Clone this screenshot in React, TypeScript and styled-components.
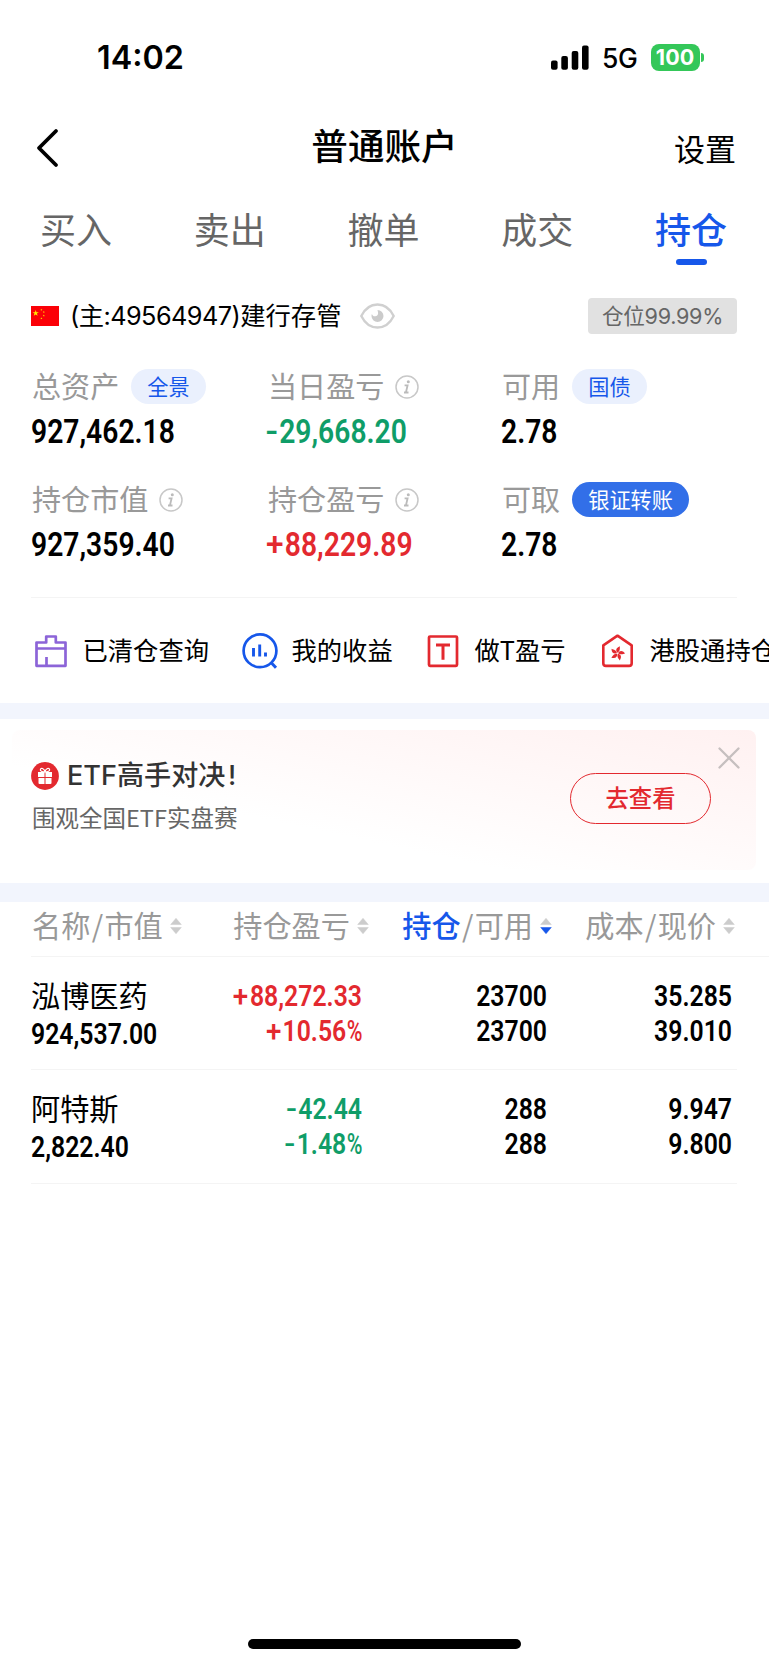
import React from "react";
import styled, { createGlobalStyle } from "styled-components";

const c = {
  blue: "#1657ea",
  red: "#e3292f",
  green: "#0f9d68",
  gray: "#999",
  band: "#f2f5fd",
  line: "#f4f4f4",
};

const CJK = `"Noto Sans CJK SC", sans-serif`;
const MIX = `Inter, "Noto Sans CJK SC", sans-serif`;

const Global = createGlobalStyle`
  * { box-sizing: border-box; }
  html, body { margin: 0; background: #fff; }
  body { font-family: ${CJK}; color: #000; overflow-x: hidden; }
  svg { display: block; flex: none; }
`;

const Page = styled.main`
  width: 769px;
  height: 1665px;
  display: flex;
  flex-direction: column;
  overflow: hidden;
  background: #fff;
`;

const StatusBar = styled.header`
  height: 96px;
  padding: 20px 65px 0 97px;
  display: flex;
  align-items: center;
  justify-content: space-between;
  font-family: Inter, sans-serif;
`;
const Clock = styled.span`
  font-size: 32.3px;
  font-weight: 600;
  line-height: 38px;
`;
const StatusRight = styled.div`
  display: flex;
  align-items: center;
  padding-bottom: 1px;
`;
const Network = styled.span`
  margin: 1px 13px 0 13px;
  font-size: 26.5px;
  font-weight: 500;
  line-height: 32px;
  letter-spacing: -0.3px;
`;
const Battery = styled.span`
  width: 49px;
  height: 27px;
  border-radius: 8px;
  background: #34c759;
  color: #fff;
  font-size: 21.5px;
  font-weight: 700;
  line-height: 27px;
  text-align: center;
`;
const BatteryTip = styled.span`
  width: 3px;
  height: 9px;
  margin-left: 1.5px;
  border-radius: 0 4px 4px 0;
  background: #34c759;
`;

const NavBar = styled.nav`
  height: 105px;
  padding: 0 33px 2px 36px;
  display: grid;
  grid-template-columns: 1fr auto 1fr;
  align-items: center;
`;
const Title = styled.h1`
  margin: 0 3px 5px 0;
  font-size: 36.6px;
  font-weight: 500;
  line-height: 44px;
`;
const Settings = styled.span`
  justify-self: end;
  font-size: 31px;
  line-height: 40px;
`;

const Tabs = styled.div`
  display: flex;
  height: 97px;
  margin: 0 1px 0 -1px;
`;
const Tab = styled.div<{ $active?: boolean }>`
  flex: 1;
  display: flex;
  flex-direction: column;
  align-items: center;
  font-size: 36px;
  line-height: 55px;
  font-weight: ${(p) => (p.$active ? 500 : 400)};
  color: ${(p) => (p.$active ? c.blue : "#666")};
`;
const TabMark = styled.span`
  width: 31px;
  height: 6px;
  margin-top: 3px;
  border-radius: 3px;
  background: ${c.blue};
`;

const Account = styled.section`
  height: 36px;
  padding: 0 32px 0 31px;
  display: flex;
  align-items: center;
`;
const AccountName = styled.span`
  margin: 0 19px 0 11px;
  font-family: ${MIX};
  font-size: 25.3px;
  line-height: 36px;
`;
const AccountNo = styled.span`
  letter-spacing: -0.55px;
`;
const Ratio = styled.span`
  margin-left: auto;
  width: 149px;
  height: 36px;
  border-radius: 4px;
  background: #e1e1e1;
  color: #666;
  font-family: ${MIX};
  font-size: 21.6px;
  line-height: 37px;
  letter-spacing: -0.3px;
  text-align: center;
`;

const Summary = styled.section`
  margin: 35px 32px 0 31px;
  height: 229px;
  display: grid;
  grid-template-columns: 236px 234px 1fr;
  grid-auto-rows: 80px;
  row-gap: 33px;
  border-bottom: 1px solid ${c.line};
`;
const Label = styled.div`
  height: 35px;
  padding-left: 1px;
  display: flex;
  align-items: center;
  gap: 12px;
  font-size: 29.1px;
  line-height: 33px;
  color: ${c.gray};

  > svg {
    margin-left: -1px;
  }
`;
const LabelText = styled.span`
  margin-top: -2px;
`;
const Pill = styled.span<{ $solid?: boolean }>`
  height: 35px;
  padding: 0 16px;
  border-radius: 18px;
  background: ${(p) => (p.$solid ? "#326fe8" : "#eaf0fd")};
  color: ${(p) => (p.$solid ? "#fff" : c.blue)};
  font-size: 21.2px;
  line-height: 33px;
`;
const Figure = styled.div<{ $size: number; $tone?: string; $right?: boolean }>`
  font-family: Roboto, sans-serif;
  font-weight: 600;
  font-size: ${(p) => p.$size}px;
  line-height: 35px;
  color: ${(p) => p.$tone ?? "#000"};
  text-align: ${(p) => (p.$right ? "right" : "left")};
  transform: scaleX(0.85);
  transform-origin: ${(p) => (p.$right ? "right" : "left")} center;
  white-space: nowrap;
`;
const Sign = styled.span<{ $minus: boolean }>`
  display: inline-block;
  margin-right: ${(p) => (p.$minus ? 3 : 2.5)}px;
  font-weight: 500;
  transform: ${(p) => (p.$minus ? "scaleX(1.3)" : "scaleX(1.12)")};
`;
const Percent = styled.span`
  display: inline-block;
  margin-left: -3px;
  font-weight: 500;
  transform: scaleX(0.86);
  transform-origin: right center;
`;
const SummaryFigure = styled(Figure)`
  margin-top: 9.5px;
  transform: scaleX(0.842);
`;

const Shortcuts = styled.section`
  height: 105px;
  padding-left: 33px;
  display: flex;
  align-items: center;
  overflow: hidden;
`;
const Shortcut = styled.div<{ $w: number }>`
  flex: none;
  width: ${(p) => p.$w}px;
  display: flex;
  align-items: center;
  gap: 13.5px;
  font-size: 25.3px;
  line-height: 36px;
  white-space: nowrap;
`;
const ShortcutText = styled.span`
  margin-top: -4px;
`;

const Band = styled.div<{ $h: number }>`
  height: ${(p) => p.$h}px;
  background: ${c.band};
`;

const Banner = styled.section`
  margin: 11px 13px 13px 12px;
  height: 140px;
  padding: 25px 45px 0 19px;
  display: flex;
  justify-content: space-between;
  border-radius: 8px;
  background: linear-gradient(12deg, #fff 35%, #fffafa 58%, #fff1f1 100%);
  position: relative;
`;
const BannerTitle = styled.div`
  display: flex;
  align-items: center;
  gap: 8px;
  height: 41px;
  font-family: ${MIX};
  font-size: 27.1px;
  font-weight: 500;
  line-height: 43px;
  color: #333;
`;
const Bang = styled.span`
  margin-left: 2.5px;
`;
const BannerSub = styled.div`
  margin: 4px 0 0 1px;
  font-size: 23.5px;
  line-height: 34px;
  color: #666;
`;
const BannerButton = styled.button`
  margin: 18px 0 0;
  width: 141px;
  height: 51px;
  padding: 0 0 3px;
  border: 1px solid ${c.red};
  border-radius: 26px;
  background: transparent;
  color: ${c.red};
  font-family: ${CJK};
  font-size: 23.3px;
  font-weight: 500;
`;
const Close = styled.span`
  position: absolute;
  top: 16px;
  right: 15px;
`;

const Row = styled.div`
  display: grid;
  margin-left: 31px;
`;
const HeadRow = styled(Row)`
  height: 55px;
  padding-top: 4px;
  border-bottom: 1px solid ${c.line};
  grid-template-columns: 155px 183px 183px 183px;
`;
const Head = styled.div<{ $left?: boolean }>`
  display: flex;
  align-items: center;
  justify-content: ${(p) => (p.$left ? "flex-start" : "flex-end")};
  padding-left: ${(p) => (p.$left ? 1 : 0)}px;
  gap: 7px;
  height: 40px;
  font-size: 29.2px;
  line-height: 38px;
  color: ${c.gray};
  white-space: nowrap;
`;
const HeadText = styled.span`
  margin-top: -4px;
`;
const Slash = styled.span`
  margin: 0 1.3px;
`;
const Strong = styled.b`
  font-weight: 500;
  color: ${c.blue};
`;
const Holding = styled(Row)`
  margin-right: 32px;
  height: 113.3px;
  grid-template-columns: 150px 181px 185px 185px;
  border-bottom: 1px solid ${c.line};
`;
const NameCell = styled.div`
  padding-top: 17px;
`;
const Name = styled.div`
  font-size: 29.2px;
  line-height: 40px;
  margin-bottom: 3px;
`;
const Cell = styled.div`
  padding-top: 22px;
`;
const HomeBar = styled.div`
  width: 273px;
  height: 10px;
  margin: auto 248px 16px;
  border-radius: 5px;
  background: #000;
`;

const Signal = () => (
  <svg width="38" height="25" viewBox="0 0 38 25">
    <rect x="0" y="15.5" width="6.6" height="9.2" rx="2" />
    <rect x="10.3" y="11" width="6.6" height="13.7" rx="2" />
    <rect x="20.7" y="6" width="6.6" height="18.7" rx="2" />
    <rect x="31" y="0.5" width="6.6" height="24.2" rx="2" />
  </svg>
);

const Back = () => (
  <svg width="24" height="40" viewBox="0 0 24 40" fill="none" stroke="#000" strokeWidth="3.8" strokeLinecap="round" strokeLinejoin="round">
    <path d="M20 3 3 20l17 17" />
  </svg>
);

const STAR = "M0-1 .225-.309.951-.309.363.118.588.809 0 .382-.588.809-.363.118-.951-.309-.225-.309Z";
const Flag = () => (
  <svg width="28" height="20" viewBox="0 0 28 20">
    <rect width="28" height="20" fill="#fb0007" />
    <g fill="#ffec00">
      <path d={STAR} transform="translate(4.7 7.2) scale(3.3)" />
      <path d={STAR} transform="translate(10.4 3.8) scale(1.1)" />
      <path d={STAR} transform="translate(12.8 6) scale(1.1)" />
      <path d={STAR} transform="translate(12.8 9.6) scale(1.1)" />
      <path d={STAR} transform="translate(10.4 12.4) scale(1.1)" />
    </g>
  </svg>
);

const Eye = () => (
  <svg width="35" height="26" viewBox="0 0 35 26">
    <path d="M1.3 13C5 5.5 10.5 1.5 17.5 1.5S30 5.5 33.7 13C30 20.5 24.5 24.5 17.5 24.5S5 20.5 1.3 13Z" fill="none" stroke="#d0d0d0" strokeWidth="2.4" />
    <path d="M17.5 7a6 6 0 1 1-6 6c0-.8.1-1.4.4-2 .6 1.7 1.9 2.5 3.3 2.3 1.9-.3 3-1.7 2.9-3.4-.1-1.2-.5-2.1-.6-2.9Z" fill="#cbcbcb" />
  </svg>
);

const Info = () => (
  <svg width="24" height="24" viewBox="0 0 24 24" fill="none" stroke="#c8c8c8">
    <circle cx="12" cy="12" r="11" strokeWidth="1.5" />
    <circle cx="13.3" cy="6.8" r="1.5" fill="#bbb" stroke="none" />
    <path d="M9.6 10.3h3l-1.7 7.2h2.600M9 17.500h1.800" stroke="#bbb" strokeWidth="1.800" />
  </svg>
);

const BoxIcon = () => (
  <svg width="36" height="36" viewBox="0 0 36 36" fill="none" stroke="#8c64d8" strokeWidth="2.700" strokeLinejoin="round">
    <path d="M3.500 9.500h9.700V3.500h9.600v6h9.700v23.300h-29ZM3.500 15.500h29M13.500 24v8.500" />
  </svg>
);
const ChartIcon = () => (
  <svg width="36" height="36" viewBox="0 0 36 36" fill="none" stroke={c.blue} strokeWidth="2.700">
    <circle cx="18" cy="17.800" r="16.400" />
    <path d="m28.800 29.300 5.200 5.400" strokeWidth="3" />
    <path d="M11.500 15v8.500M17.700 11.500v12M23.500 19.500v4" strokeWidth="2.900" />
  </svg>
);
const TIcon = () => (
  <svg width="35" height="36" viewBox="0 0 35 36" fill="none" stroke={c.red} strokeWidth="2.700" strokeLinejoin="round">
    <rect x="3" y="3.500" width="28" height="29.300" rx="1" />
    <path d="M10 11.900h14M17 12v14.800" strokeWidth="3" />
  </svg>
);
const HouseIcon = () => (
  <svg width="36" height="36" viewBox="0 0 36 36" fill="none" stroke={c.red} strokeWidth="2.600" strokeLinejoin="round">
    <path d="M17.500 2.700 31.700 12.300v18q0 2.600-2.600 2.600H5.900q-2.600 0-2.600-2.600v-18Z" />
    {[0, 72, 144, 216, 288].map((r) => (
      <path key={r} d="M0-.6C-2.200-2.400-2.400-5.400 1.800-7.300 1.400-6 3.200-3.200 0-.6Z" fill={c.red} stroke="none" transform={`translate(17.500 20.300) rotate(${r + 5})`} />
    ))}
  </svg>
);
const Gift = () => (
  <svg width="28" height="28" viewBox="0 0 28 28">
    <circle cx="14" cy="14" r="13.900" fill={c.red} />
    <path d="M7 10h6.500v5H7ZM14.500 10H21v5h-6.500ZM7.500 16h6v6h-5q-1 0-1-1ZM14.500 16h6v5q0 1-1 1h-5Z" fill="#fff" />
    <path d="M13.800 9.800C11 9.800 9 9 9.400 7.300c.5-1.700 3.600-1.300 4.600 2.300 1-3.600 4.100-4 4.600-2.300.4 1.700-1.600 2.500-4.800 2.500Z" fill="none" stroke="#fff" strokeWidth="1.200" />
  </svg>
);
const Cross = () => (
  <svg width="24" height="24" viewBox="0 0 24 24" stroke="#c6bfbf" strokeWidth="2.300" strokeLinecap="round">
    <path d="m2.500 2.500 19 19M21.500 2.500l-19 19" />
  </svg>
);
const Sort = ({ down }: { down?: boolean }) => (
  <svg width="12" height="16" viewBox="0 0 12 16">
    <path d="M6 .3 11.300 6.500H.7Z" fill="#ccc" stroke="#ccc" strokeWidth=".5" strokeLinejoin="round" />
    <path d="M6 15.700 11.300 9.500H.7Z" fill={down ? c.blue : "#ccc"} stroke={down ? c.blue : "#ccc"} strokeWidth=".5" strokeLinejoin="round" />
  </svg>
);

const Amount = ({ value }: { value: string }) => {
  const [, sign, digits, percent] = value.match(/^([+-]?)([\d.,]+)(%?)$/)!;
  return (
    <>
      {sign && <Sign $minus={sign === "-"}>{sign}</Sign>}
      {digits}
      {percent && <Percent>%</Percent>}
    </>
  );
};

const summary = [
  { label: "总资产", value: "927,462.18", extra: <Pill>全景</Pill> },
  { label: "当日盈亏", value: "-29,668.20", tone: c.green, extra: <Info /> },
  { label: "可用", value: "2.78", extra: <Pill>国债</Pill> },
  { label: "持仓市值", value: "927,359.40", extra: <Info /> },
  { label: "持仓盈亏", value: "+88,229.89", tone: c.red, extra: <Info /> },
  { label: "可取", value: "2.78", extra: <Pill $solid>银证转账</Pill> },
];

const holdings = [
  { name: "泓博医药", value: "924,537.00", tone: c.red, pnl: ["+88,272.33", "+10.56%"], qty: ["23700", "23700"], price: ["35.285", "39.010"] },
  { name: "阿特斯", value: "2,822.40", tone: c.green, pnl: ["-42.44", "-1.48%"], qty: ["288", "288"], price: ["9.947", "9.800"] },
];

const Pair = ({ values, tone }: { values: string[]; tone?: string }) => (
  <Cell>
    {values.map((v, i) => (
      <Figure key={i} $size={29.2} $tone={tone} $right>
        <Amount value={v} />
      </Figure>
    ))}
  </Cell>
);

export default function App() {
  return (
    <Page>
      <Global />
      <StatusBar>
        <Clock>14:02</Clock>
        <StatusRight>
          <Signal />
          <Network>5G</Network>
          <Battery>100</Battery>
          <BatteryTip />
        </StatusRight>
      </StatusBar>
      <NavBar>
        <Back />
        <Title>普通账户</Title>
        <Settings>设置</Settings>
      </NavBar>
      <Tabs>
        <Tab>买入</Tab>
        <Tab>卖出</Tab>
        <Tab>撤单</Tab>
        <Tab>成交</Tab>
        <Tab $active>持仓<TabMark /></Tab>
      </Tabs>
      <Account>
        <Flag />
        <AccountName><AccountNo>(主:49564947)</AccountNo>建行存管</AccountName>
        <Eye />
        <Ratio>仓位99.99%</Ratio>
      </Account>
      <Summary>
        {summary.map((s) => (
          <div key={s.label}>
            <Label><LabelText>{s.label}</LabelText>{s.extra}</Label>
            <SummaryFigure $size={33.6} $tone={s.tone}><Amount value={s.value} /></SummaryFigure>
          </div>
        ))}
      </Summary>
      <Shortcuts>
        <Shortcut $w={209}><BoxIcon /><ShortcutText>已清仓查询</ShortcutText></Shortcut>
        <Shortcut $w={184}><ChartIcon /><ShortcutText>我的收益</ShortcutText></Shortcut>
        <Shortcut $w={174}><TIcon /><ShortcutText>做T盈亏</ShortcutText></Shortcut>
        <Shortcut $w={180}><HouseIcon /><ShortcutText>港股通持仓</ShortcutText></Shortcut>
      </Shortcuts>
      <Band $h={16} />
      <Banner>
        <div>
          <BannerTitle><Gift /><span>ETF高手对决<Bang>!</Bang></span></BannerTitle>
          <BannerSub>围观全国ETF实盘赛</BannerSub>
        </div>
        <BannerButton>去查看</BannerButton>
        <Close><Cross /></Close>
      </Banner>
      <Band $h={19} />
      <HeadRow>
        <Head $left><HeadText>名称<Slash>/</Slash>市值</HeadText><Sort /></Head>
        <Head><HeadText>持仓盈亏</HeadText><Sort /></Head>
        <Head><HeadText><Strong>持仓</Strong><Slash>/</Slash>可用</HeadText><Sort down /></Head>
        <Head><HeadText>成本<Slash>/</Slash>现价</HeadText><Sort /></Head>
      </HeadRow>
      {holdings.map((h) => (
        <Holding key={h.name}>
          <NameCell>
            <Name>{h.name}</Name>
            <Figure $size={29.2}>{h.value}</Figure>
          </NameCell>
          <Pair values={h.pnl} tone={h.tone} />
          <Pair values={h.qty} />
          <Pair values={h.price} />
        </Holding>
      ))}
      <HomeBar />
    </Page>
  );
}
